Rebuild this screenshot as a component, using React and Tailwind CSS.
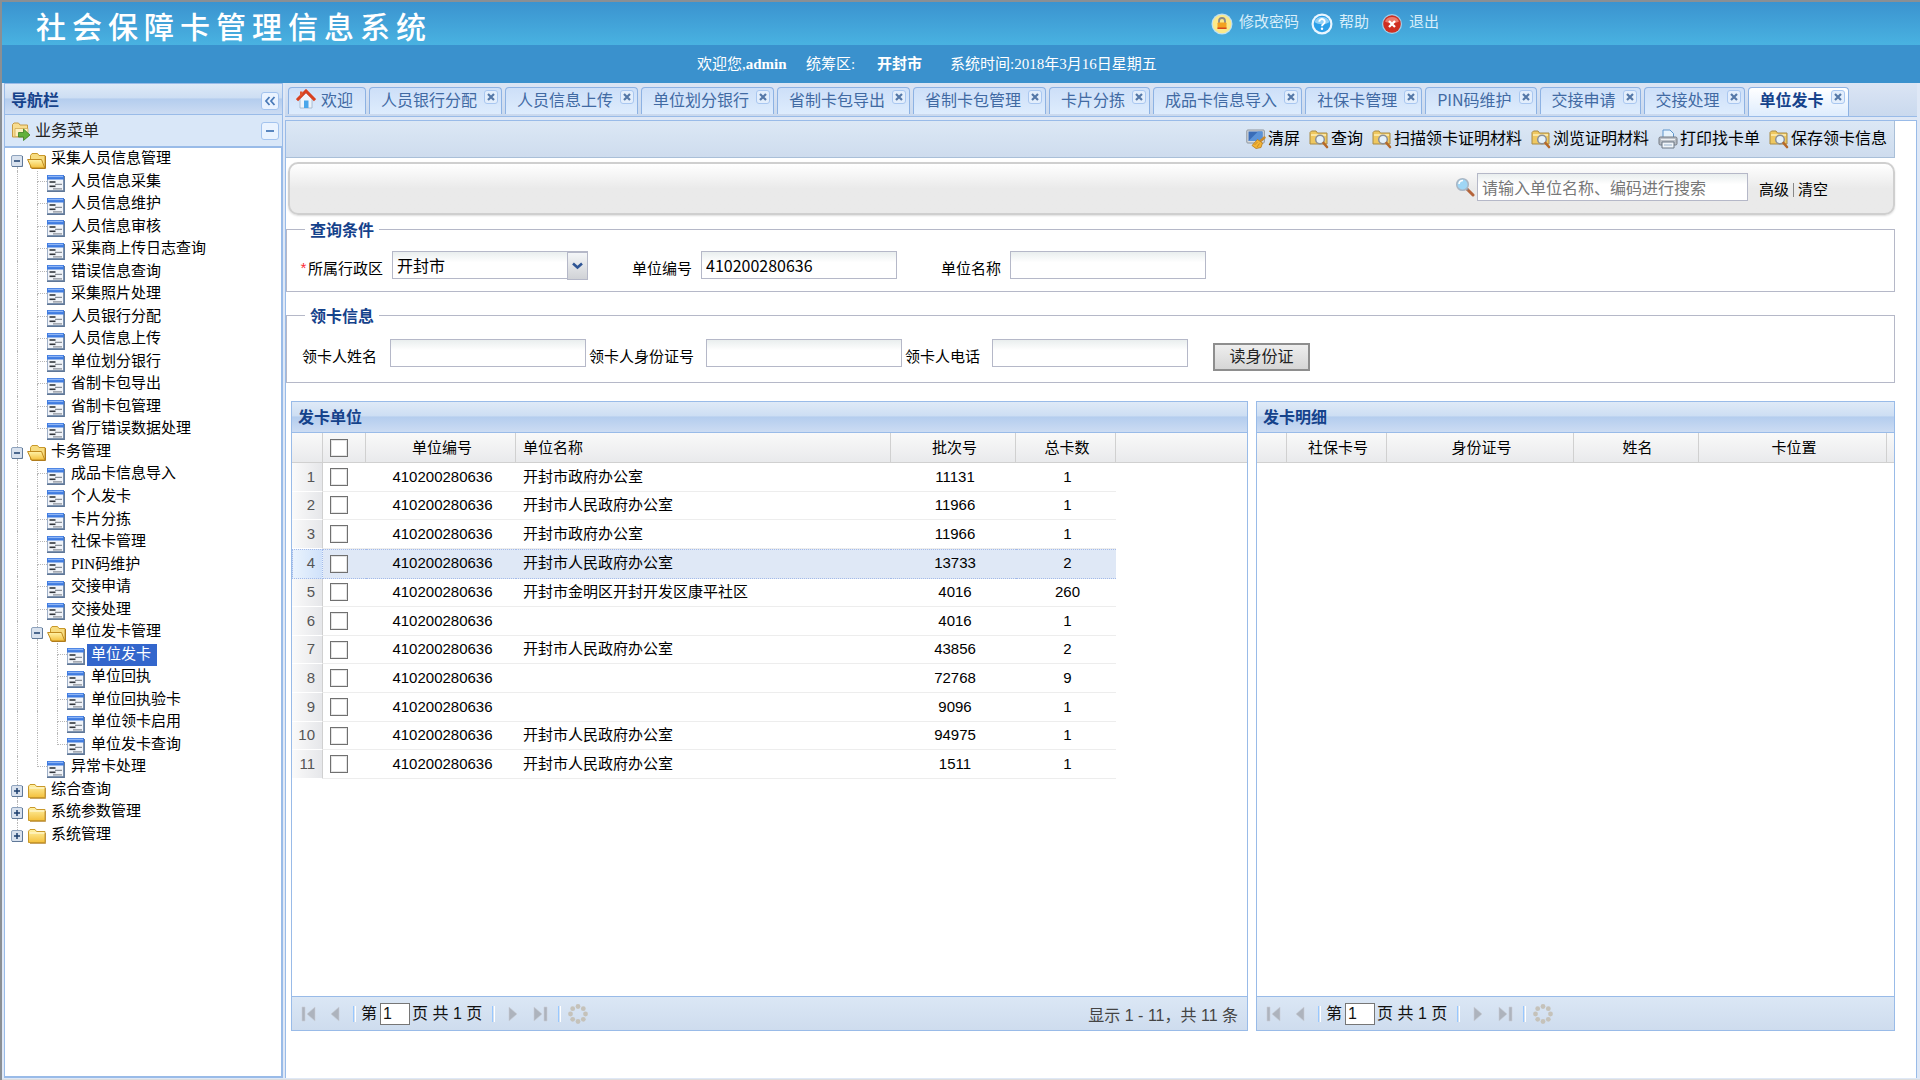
import React from 'react';

const TABS = [
  ['人员银行分配'], ['人员信息上传'], ['单位划分银行'], ['省制卡包导出'], ['省制卡包管理'], ['卡片分拣'],
  ['成品卡信息导入'], ['社保卡管理'], ['PIN码维护'], ['交接申请'], ['交接处理'], ['单位发卡', true],
];

const leaf = (label, selected) => ({ label, selected });
const TREE = [
  {
    label: '采集人员信息管理', open: true,
    children: ['人员信息采集', '人员信息维护', '人员信息审核', '采集商上传日志查询', '错误信息查询', '采集照片处理', '人员银行分配', '人员信息上传', '单位划分银行', '省制卡包导出', '省制卡包管理', '省厅错误数据处理'].map((t) => leaf(t)),
  },
  {
    label: '卡务管理', open: true,
    children: [
      ...['成品卡信息导入', '个人发卡', '卡片分拣', '社保卡管理', 'PIN码维护', '交接申请', '交接处理'].map((t) => leaf(t)),
      {
        label: '单位发卡管理', open: true,
        children: [leaf('单位发卡', true), leaf('单位回执'), leaf('单位回执验卡'), leaf('单位领卡启用'), leaf('单位发卡查询')],
      },
      leaf('异常卡处理'),
    ],
  },
  { label: '综合查询', children: [] },
  { label: '系统参数管理', children: [] },
  { label: '系统管理', children: [] },
];

function flatten(nodes, lines = []) {
  return nodes.flatMap((node, i) => {
    const last = i === nodes.length - 1;
    const row = { ...node, lines, last };
    return [row, ...(node.children && node.open ? flatten(node.children, [...lines, !last]) : [])];
  });
}
const ROWS = flatten(TREE);

const UNITS = [
  ['开封市政府办公室', '11131', '1'],
  ['开封市人民政府办公室', '11966', '1'],
  ['开封市政府办公室', '11966', '1'],
  ['开封市人民政府办公室', '13733', '2'],
  ['开封市金明区开封开发区康平社区', '4016', '260'],
  ['', '4016', '1'],
  ['开封市人民政府办公室', '43856', '2'],
  ['', '72768', '9'],
  ['', '9096', '1'],
  ['开封市人民政府办公室', '94975', '1'],
  ['开封市人民政府办公室', '1511', '1'],
];

/* ---------- icons ---------- */

function FolderIcon({ open }) {
  return (
    <svg width="20" height="18" viewBox="0 0 20 18" className="shrink-0" aria-hidden="true">
      <defs>
        <linearGradient id="fold" x1="0" y1="0" x2="0" y2="1">
          <stop offset="0" stopColor="#fff3a8" />
          <stop offset="1" stopColor="#f4c03c" />
        </linearGradient>
      </defs>
      {open ? (
        <>
          <path d="M3.500 15.500V3.500L5 1.500h5.500l1.500 2h6v11.500z" fill="#f7dc80" stroke="#c9992a" />
          <path d="M.6 7.500h13.900l3.300 8.500H4.500z" fill="url(#fold)" stroke="#c08a1e" />
          <path d="M18.500 4v12.500H4.500" fill="none" stroke="#b07c1c" />
        </>
      ) : (
        <>
          <path d="M1.500 15.500V4.200L3 2.500h5l1.500 2h8.500v11z" fill="url(#fold)" stroke="#c9992a" />
          <path d="M2.500 6h15" stroke="#fffbe0" />
          <path d="M18.500 6v10.500H3" fill="none" stroke="#b07c1c" opacity=".7" />
        </>
      )}
    </svg>
  );
}

function PageIcon() {
  return (
    <svg width="18" height="18" viewBox="0 0 18 18" className="shrink-0" aria-hidden="true">
      <rect x=".5" y="1.500" width="16" height="15" fill="#f1f4f9" stroke="#9fb0c8" />
      <path d="M0 17.200h17.200V2" fill="none" stroke="#5e7696" strokeWidth="1.500" />
      <rect x="0" y="1" width="17" height="4.500" fill="#3f7be0" />
      <rect x="1" y="1.800" width="15" height="1.300" fill="#8fb6f6" />
      <path d="M2.500 8h6" stroke="#33373d" strokeWidth="1.600" />
      <path d="M8 10.300h7M6 14.800h9" stroke="#8a9099" strokeWidth="1.300" />
      <path d="M2.500 12.300h6" stroke="#33373d" strokeWidth="1.600" />
    </svg>
  );
}

function Toggle({ open }) {
  return (
    <svg width="12" height="12" viewBox="0 0 12 12" aria-hidden="true">
      <rect x=".5" y=".5" width="11" height="11" rx="1.500" fill="#d9e2ee" stroke="#8fa3bd" />
      <path d="M1 11.500h10.500V1" fill="none" stroke="#5f7898" />
      <path d={open ? 'M3 6h6' : 'M3 6h6M6 3v6'} stroke="#1d3f6e" strokeWidth="1.500" />
    </svg>
  );
}

function FolderSearchIcon() {
  return (
    <svg width="20" height="20" viewBox="0 0 20 20" className="shrink-0" aria-hidden="true">
      <path d="M1 15V3.500L2.500 2H7l1.500 2H18v11z" fill="#efc860" stroke="#a98a44" />
      <path d="M2 6h15" stroke="#fff0b8" strokeWidth="1.500" />
      <circle cx="11" cy="10.500" r="4.300" fill="#e4f1fb" stroke="#8b8f96" strokeWidth="1.500" />
      <path d="M14.500 14l3.500 4" stroke="#b5692b" strokeWidth="2.600" strokeLinecap="round" />
    </svg>
  );
}

function ClearIcon() {
  return (
    <svg width="20" height="20" viewBox="0 0 20 20" className="shrink-0" aria-hidden="true">
      <rect x=".8" y="1" width="17.500" height="13" rx="1" fill="#d6dade" stroke="#8d949c" />
      <rect x="2.500" y="2.500" width="14" height="9.500" fill="#3a6db8" />
      <path d="M2.500 12L12 2.500h4.500V12z" fill="#5b93d8" />
      <path d="M18.500 8.500l-4 3.500" stroke="#c98a2c" strokeWidth="2.400" strokeLinecap="round" />
      <path d="M11.500 10.500l5 3.500-1.500 4.500-5 1-4-3z" fill="#f2b436" stroke="#b97a1b" strokeWidth=".8" />
      <path d="M8.500 16l3-3M11 18l2.500-3.500" stroke="#c4821d" strokeWidth=".8" />
    </svg>
  );
}

function PrintIcon() {
  return (
    <svg width="20" height="20" viewBox="0 0 20 20" className="shrink-0" aria-hidden="true">
      <path d="M5 9V1h7l3.500 3.500V9z" fill="#e6f3fd" stroke="#5d94cb" />
      <rect x="1" y="8" width="18" height="8" rx="1.500" fill="#b4bac2" stroke="#747a83" />
      <path d="M3 10.500h14" stroke="#eef0f2" strokeWidth="1.300" />
      <path d="M4 13h12v6H4z" fill="#f0f5fa" stroke="#6d7986" />
      <path d="M6 16h8" stroke="#9ab4cf" />
    </svg>
  );
}

function MagnifierIcon() {
  return (
    <svg width="20" height="20" viewBox="0 0 20 20" className="shrink-0" aria-hidden="true">
      <path d="M12 12l6 6" stroke="#b5643a" strokeWidth="3" strokeLinecap="round" />
      <path d="M11 11l2 2" stroke="#8a8f98" strokeWidth="2" />
      <circle cx="7.500" cy="7.500" r="5.800" fill="#9fd6f5" stroke="#a9b6c4" strokeWidth="1.500" />
      <path d="M4 7a4 4 0 0 1 4-3.500" fill="none" stroke="#fff" strokeWidth="1.600" />
    </svg>
  );
}

function LockIcon() {
  return (
    <svg width="22" height="22" viewBox="0 0 22 22" aria-hidden="true">
      <circle cx="11" cy="11" r="10.500" fill="#fff" opacity=".65" />
      <circle cx="11" cy="11" r="9.300" fill="#fbe98a" />
      <path d="M8 10V8a3 3 0 0 1 6 0v2" fill="none" stroke="#8a8a8a" strokeWidth="1.800" />
      <rect x="6.500" y="9.500" width="9" height="6.500" rx=".8" fill="#f3a21f" />
      <path d="M6.500 14.500h9V16h-9z" fill="#d8471c" />
    </svg>
  );
}

function HelpIcon() {
  return (
    <svg width="22" height="22" viewBox="0 0 22 22" aria-hidden="true">
      <circle cx="11" cy="11" r="10.500" fill="#eaf6ff" />
      <circle cx="11" cy="11" r="8.300" fill="#2b9fe8" />
      <path d="M3.500 9a8 7.500 0 0 1 15 0c-4 3-11 3-15 0z" fill="#8fd0f7" />
      <path d="M8.300 8.800a2.700 2.700 0 1 1 4.200 2.200c-1.100.7-1.500 1.100-1.500 2.200" fill="none" stroke="#fff" strokeWidth="1.900" />
      <circle cx="11" cy="15.800" r="1.200" fill="#fff" />
    </svg>
  );
}

function ExitIcon() {
  return (
    <svg width="22" height="22" viewBox="0 0 22 22" aria-hidden="true">
      <circle cx="11" cy="11" r="10" fill="#fff" opacity=".5" />
      <circle cx="11" cy="11" r="8.800" fill="#cf2f22" />
      <path d="M4 8.500a7.500 7 0 0 1 14 0c-4 2-10 2-14 0z" fill="#ec7a6c" />
      <path d="M8 8l6 6M14 8l-6 6" stroke="#fff" strokeWidth="2.300" />
    </svg>
  );
}

function HomeIcon() {
  return (
    <svg width="20" height="20" viewBox="0 0 20 20" className="shrink-0" aria-hidden="true">
      <path d="M4 9.500L10 4l6 5.500V19H4z" fill="#eef4fb" stroke="#9fb2c9" strokeWidth=".8" />
      <rect x="8" y="11.500" width="4.500" height="7.500" fill="#4aa6ea" />
      <path d="M1 11.200L10 2l9 9.200" fill="none" stroke="#d9401f" strokeWidth="3" />
      <path d="M4 2.500h2.500V6L4 8z" fill="#e0562e" />
    </svg>
  );
}

function MenuFolderIcon() {
  return (
    <svg width="20" height="20" viewBox="0 0 20 20" className="shrink-0" aria-hidden="true">
      <path d="M1.500 16V3.500L3 2h4.500L9 4h7.500v12z" fill="#f8dd90" stroke="#c59a45" />
      <path d="M4 7.500h13v8H4z" fill="#fdf0c0" stroke="#d2ab55" strokeWidth=".8" />
      <path d="M7.500 11.500h5V8l6.500 6-6.500 5.500v-3.500h-5z" fill="#63b13c" stroke="#3b7e22" strokeWidth=".8" />
    </svg>
  );
}

const PAGE_ICONS = {
  first: 'M1 1h3v14H1zM14 1v14L6 8z',
  prev: 'M9 1v14L1 8z',
  next: 'M1 1v14l8-7z',
  last: 'M1 1v14l8-7zM11 1h3v14h-3z',
};

function PagerButton({ kind, label, className }) {
  const wide = kind === 'first' || kind === 'last';
  return (
    <button type="button" aria-label={label} className={className}>
      <svg width={wide ? 15 : 10} height="16" viewBox={wide ? '0 0 15 16' : '0 0 10 16'}>
        <path d={PAGE_ICONS[kind]} fill="#adb3bd" stroke="#c9ced6" strokeWidth=".6" />
      </svg>
    </button>
  );
}

function SpinnerIcon() {
  return (
    <svg width="20" height="20" viewBox="0 0 20 20">
      {[[10, 2.500], [15.300, 4.700], [17.500, 10], [15.300, 15.300], [10, 17.500], [4.700, 15.300], [2.500, 10], [4.700, 4.700]].map(([x, y]) => (
        <circle key={`${x}-${y}`} cx={x} cy={y} r="2.400" fill="#c5c2ba" />
      ))}
    </svg>
  );
}

/* ---------- pieces ---------- */

function TopLink({ icon, children }) {
  return (
    <a href="#" className="flex items-center gap-[6px] text-[15px] text-[#d9effa]">
      {icon}
      <span className="pb-[2px]">{children}</span>
    </a>
  );
}

function TreeLine({ visible }) {
  return <span className="w-5 self-stretch pl-[10px]"><span className={visible ? 'block h-full border-l border-dotted border-[#b8b8b8]' : 'hidden'} /></span>;
}

function TreeRow({ row }) {
  const folder = !!row.children;
  const depth = row.lines.length;
  return (
    <li className="flex min-h-0 items-center pl-[2px]">
      {row.lines.map((on, i) => <TreeLine key={i} visible={on} />)}
      {folder ? (
        <button type="button" aria-label={row.label} className="flex w-5 flex-col items-center self-stretch">
          <span className={depth === 0 && row.label === TREE[0].label ? 'flex-1' : 'flex-1 border-l border-dotted border-[#b8b8b8]'} />
          <Toggle open={row.open} />
          <span className={row.last ? 'h-1' : 'h-1 border-l border-dotted border-[#b8b8b8]'} />
        </button>
      ) : (
        <span className="flex w-5 flex-col self-stretch pl-[10px]">
          <span className="h-1/2 border-b border-l border-dotted border-[#b8b8b8]" />
          <span className={row.last ? 'h-1/2' : 'h-1/2 border-l border-dotted border-[#b8b8b8]'} />
        </span>
      )}
      <span className="w-5 pt-[3px]">{folder ? <FolderIcon open={row.open} /> : <PageIcon />}</span>
      <a href="#" className={row.selected ? 'bg-[#3366cc] pr-[6px] pb-[2px] pl-1 leading-5 text-white' : 'pb-[2px] pl-1 leading-5'}>{row.label}</a>
    </li>
  );
}

function Tab({ label, active }) {
  return (
    <div
      className={
        active
          ? 'flex h-[29px] rounded-t border border-b-0 border-[#8db2e3] bg-gradient-to-b from-white to-[#deecfd] pr-[3px] pl-[11px] font-bold text-[#15428b]'
          : 'flex h-[27px] rounded-t border border-b-0 border-[#8db2e3] bg-gradient-to-b from-[#cddff8] to-[#deecfd] pr-[3px] pl-[11px] text-[#416aa3]'
      }
    >
      <button type="button" className="h-[26px] pb-1 leading-[22px]">{label}</button>
      <button type="button" aria-label={`关闭${label}`} className="mt-[2px] ml-[7px] flex size-[14px] items-center justify-center rounded-[3px] border border-[#a9c7f0] bg-[#e3eefc]">
        <svg width="8" height="8" viewBox="0 0 8 8"><path d="M1 1l6 6M7 1L1 7" stroke="#5578a8" strokeWidth="2.200" /></svg>
      </button>
    </div>
  );
}

const FIELD = 'h-7 w-[196px] border border-[#b5b8c8] bg-gradient-to-b from-[#e9eeee] via-white via-40% to-white px-1 text-base text-black outline-none';

function Field({ id, label, labelClass, value }) {
  return (
    <div className="flex items-start">
      <label htmlFor={id} className={labelClass}>{label}</label>
      <input id={id} defaultValue={value} className={FIELD} />
    </div>
  );
}

function ToolButton({ icon, children }) {
  return <button type="button" className="flex items-center gap-[2px] text-base text-black">{icon}{children}</button>;
}

function Separator() {
  return <span className="h-4 w-[3px] border-r border-l border-r-white border-l-[#98c8ff]" />;
}

function Pager({ id, info }) {
  return (
    <div className="flex h-[34px] items-center border-t border-[#99bbe8] bg-gradient-to-b from-[#dbe7f5] to-[#cedcee] pl-[9px] text-base whitespace-nowrap text-[#111]">
      <PagerButton kind="first" label="首页" className="w-[29px]" />
      <PagerButton kind="prev" label="上一页" className="w-[23px]" />
      <Separator />
      <label htmlFor={id} className="ml-[5px]">第</label>
      <input id={id} defaultValue="1" className="ml-[3px] h-[22px] w-[30px] border border-[#767676] bg-white px-[2px]" />
      <span className="ml-[2px] w-[80px]">页 共 1 页</span>
      <Separator />
      <PagerButton kind="next" label="下一页" className="ml-[13px] w-[25px]" />
      <PagerButton kind="last" label="末页" className="w-[25px]" />
      <Separator />
      <button type="button" aria-label="刷新" className="ml-[7px]"><SpinnerIcon /></button>
      {info && <span className="ml-auto pt-1 pr-[9px] text-[#444]">{info}</span>}
    </div>
  );
}

function PanelTitle({ children }) {
  return (
    <h2 className="h-[31px] border-b border-[#99bbe8] bg-[linear-gradient(to_bottom,#dfeaf7_0%,#cddef3_46%,#b4cdee_50%,#ccdcf3_100%)] pl-[6px] text-base leading-[32px] font-bold text-[#15428b]">{children}</h2>
  );
}

const TH = 'h-[30px] border-r border-b border-[#d0d0d0] bg-gradient-to-b from-[#f9f9f9] to-[#e9eaec] p-0 pt-px font-normal';
const CHECK = 'block size-[18px] appearance-none border border-[#707070] bg-white shadow-[inset_0_0_0_1px_#e4e4e4]';

function UnitTable() {
  return (
    <table className="h-[346px] w-full table-fixed border-separate border-spacing-0 text-[15px] text-black">
      <colgroup>
        <col className="w-[31px]" />
        <col className="w-[43px]" />
        <col className="w-[150px]" />
        <col className="w-[375px]" />
        <col className="w-[125px]" />
        <col className="w-[100px]" />
        <col />
      </colgroup>
      <thead>
        <tr>
          <th className={TH} />
          <th className={TH}><input type="checkbox" aria-label="全选" className={`${CHECK} ml-[7px]`} /></th>
          <th className={`${TH} pl-[3px]`}>单位编号</th>
          <th className={`${TH} pl-[7px] text-left`}>单位名称</th>
          <th className={`${TH} pl-[3px]`}>批次号</th>
          <th className={`${TH} pl-[3px]`}>总卡数</th>
          <th className="border-b border-[#d0d0d0] bg-gradient-to-b from-[#f9f9f9] to-[#e9eaec]" />
        </tr>
      </thead>
      <tbody>
        {UNITS.map(([name, batch, total], i) => {
          const on = i === 3;
          const cell = on ? 'border-y border-dotted border-[#a3bae9] bg-[#dfe8f6] p-0' : 'border-b border-[#ededed] p-0';
          return (
            <tr key={i}>
              <td className={on ? 'border border-dotted border-[#a3bae9] bg-gradient-to-r from-[#eaf3fd] to-[#cfe1fa] p-0' : 'border-r border-b border-r-[#d0d0d0] border-b-white bg-gradient-to-r from-[#fafafa] to-[#e6e7ea] p-0'}>
                <div className="pr-[7px] text-right text-[#555]">{i + 1}</div>
              </td>
              <td className={cell}><input type="checkbox" aria-label={`选择第${i + 1}行`} className={`${CHECK} ml-[7px]`} /></td>
              <td className={`${cell} text-center`}><div className="pl-[3px]">410200280636</div></td>
              <td className={cell}><div className="pl-[7px]">{name}</div></td>
              <td className={`${cell} text-center`}><div className="pl-[3px]">{batch}</div></td>
              <td className={`${cell} text-center`}><div className="pl-[3px]">{total}</div></td>
              <td />
            </tr>
          );
        })}
      </tbody>
    </table>
  );
}

function DetailTable() {
  return (
    <table className="w-full table-fixed border-separate border-spacing-0 text-[15px] text-black">
      <colgroup>
        <col className="w-[30px]" />
        <col className="w-[100px]" />
        <col className="w-[187px]" />
        <col className="w-[125px]" />
        <col className="w-[188px]" />
        <col />
      </colgroup>
      <thead>
        <tr>
          <th className={TH} />
          <th className={`${TH} pl-[3px]`}>社保卡号</th>
          <th className={`${TH} pl-[3px]`}>身份证号</th>
          <th className={`${TH} pl-[3px]`}>姓名</th>
          <th className={`${TH} pl-[3px]`}>卡位置</th>
          <th className="border-b border-[#d0d0d0] bg-gradient-to-b from-[#f9f9f9] to-[#e9eaec]" />
        </tr>
      </thead>
    </table>
  );
}

const LEGEND = 'ml-[18px] px-[5px] text-base leading-6 font-bold text-[#15428b]';

export default function App() {
  return (
    <div className="flex min-h-screen flex-col border-t-2 border-l-2 border-[#8a8f94] bg-white font-['Liberation_Sans','Noto_Sans_CJK_SC',sans-serif] text-black">
      <header className="font-['Liberation_Serif','Noto_Sans_CJK_SC',serif]">
        <div className="flex h-[43px] items-center bg-gradient-to-b from-[#3b93cf] to-[#49b2e1]">
          <h1 className="w-[1209px] pt-2 pl-[34px] text-[30px] leading-[35px] font-medium text-white">
            {[...'社会保障卡管理信息系统'].map((ch, i) => <span key={i} className="mr-[6px]">{ch}</span>)}
          </h1>
          <nav className="flex gap-3">
            <TopLink icon={<LockIcon />}>修改密码</TopLink>
            <TopLink icon={<HelpIcon />}>帮助</TopLink>
            <TopLink icon={<ExitIcon />}>退出</TopLink>
          </nav>
        </div>
        <div className="flex h-[38px] items-center bg-[#3a91cd] pl-[695px] text-[15px] whitespace-nowrap text-white">
          <span className="w-[109px]">欢迎您,<b>admin</b></span>
          <span className="w-[71px]">统筹区:</span>
          <b className="w-[73px]">开封市</b>
          <span>系统时间:2018年3月16日星期五</span>
        </div>
      </header>

      <div className="flex flex-1 border-b border-[#ddd] bg-[#dfe8f6] pb-px">
        <aside className="flex w-[281px] shrink-0 flex-col pl-[2px]">
          <div className="flex h-8 items-center justify-between border border-[#99bbe8] bg-[linear-gradient(to_bottom,#dfeaf7_0%,#cddef3_46%,#b4cdee_50%,#ccdcf3_100%)] pt-[3px] pr-[3px] pl-[6px]">
            <h2 className="text-base font-bold text-[#15428b]">导航栏</h2>
            <button type="button" aria-label="收起" className="flex size-[18px] items-center justify-center rounded-[3px] border border-[#a3c3ee] bg-[#eaf3ff]">
              <svg width="12" height="12" viewBox="0 0 12 12"><path d="M5.500 2L2 6l3.500 4M10.500 2L7 6l3.500 4" fill="none" stroke="#4a7ab8" strokeWidth="1.800" /></svg>
            </button>
          </div>
          <div className="flex h-[31px] items-center gap-1 border-x border-[#99bbe8] bg-[#d9e7f8] pt-px pr-[3px] pl-[6px]">
            <MenuFolderIcon />
            <h3 className="text-base text-[#222]">业务菜单</h3>
            <button type="button" aria-label="折叠" className="ml-auto flex size-[18px] items-center justify-center rounded-[3px] border border-[#a3c3ee] bg-[#eaf3ff]">
              <svg width="10" height="10" viewBox="0 0 10 10"><path d="M1 5h8" stroke="#4a7ab8" strokeWidth="1.800" /></svg>
            </button>
          </div>
          <nav className="flex-1 border-2 border-l border-[#99bbe8] bg-white">
            <ul className="grid h-[698px] auto-rows-fr font-['Liberation_Serif','Noto_Sans_CJK_SC',serif] text-[15px] whitespace-nowrap">
              {ROWS.map((row, i) => <TreeRow key={i} row={row} />)}
            </ul>
          </nav>
        </aside>

        <div className="mr-[3px] ml-[2px] flex min-w-0 flex-1 flex-col">
          <div className="flex h-[34px] items-start gap-[3px] border-b border-[#99bbe8] bg-gradient-to-b from-[#dbe5f4] to-[#cad9ee] pt-1 pl-[3px] font-['Noto_Sans_CJK_SC',sans-serif] text-base whitespace-nowrap">
            <div className="flex h-[27px] rounded-t border border-b-0 border-[#8db2e3] bg-gradient-to-b from-[#cddff8] to-[#deecfd] pr-3 pl-[7px] text-[#416aa3]">
              <button type="button" className="flex h-[26px] items-center gap-[5px] pb-1 leading-[22px]"><HomeIcon />欢迎</button>
            </div>
            {TABS.map(([label, active]) => <Tab key={label} label={label} active={active} />)}
          </div>

          <main className="mt-[3px] flex flex-1 flex-col border-t border-r border-l border-[#99bbe8] bg-white pr-[21px] pb-[47px]">
            <div className="flex h-[37px] items-center justify-end gap-[9px] border-r border-b border-[#a9bfd8] bg-gradient-to-b from-[#dce8f5] to-[#cedcee] pr-[7px] whitespace-nowrap">
              <ToolButton icon={<ClearIcon />}>清屏</ToolButton>
              <ToolButton icon={<FolderSearchIcon />}>查询</ToolButton>
              <ToolButton icon={<FolderSearchIcon />}>扫描领卡证明材料</ToolButton>
              <ToolButton icon={<FolderSearchIcon />}>浏览证明材料</ToolButton>
              <ToolButton icon={<PrintIcon />}>打印找卡单</ToolButton>
              <ToolButton icon={<FolderSearchIcon />}>保存领卡信息</ToolButton>
            </div>

            <form className="mt-1 ml-[2px] flex h-[53px] items-center justify-end rounded-[10px] border-2 border-[#cfcfcf] bg-gradient-to-b from-white to-[#eaeaea] to-50% pr-[65px] pb-[3px] shadow-[0_1px_2px_#ddd]">
              <label htmlFor="unit-search" aria-label="搜索" className="mr-[2px]"><MagnifierIcon /></label>
              <input id="unit-search" placeholder="请输入单位名称、编码进行搜索" className="h-7 w-[271px] border border-[#b5b8c8] bg-gradient-to-b from-[#e9eeee] via-white via-40% to-white px-1 font-['Noto_Sans_CJK_SC',sans-serif] text-base placeholder:text-[#777]" />
              <div className="ml-[11px] flex items-center gap-1 pt-[6px] text-[15px]">
                <a href="#">高级</a>
                <span className="h-[14px] w-px bg-[#888]" />
                <a href="#">清空</a>
              </div>
            </form>

            <fieldset className="mt-[2px] h-[75px] border border-[#b5b8c8] font-['Noto_Sans_CJK_SC',sans-serif] text-[15px]">
              <legend className={LEGEND}>查询条件</legend>
              <div className="flex gap-11 pt-[10px] pl-3">
                <div className="flex items-start">
                  <label htmlFor="region" className="w-[93px] pt-[6px] leading-[22px]"><span className="font-['Liberation_Mono',monospace] text-red-500">*</span>所属行政区</label>
                  <div className="relative">
                    <select id="region" defaultValue="开封市" className={`${FIELD} appearance-none`}>
                      <option>开封市</option>
                    </select>
                    <span className="pointer-events-none absolute top-px right-0 flex h-7 w-[21px] items-center justify-center border border-[#b5b8c8] bg-gradient-to-b from-[#f4f6f8] to-[#d0d2d6]">
                      <svg width="11" height="8" viewBox="0 0 11 8"><path d="M1 1.500l4.500 4 4.500-4" fill="none" stroke="#2f5595" strokeWidth="2.600" /></svg>
                    </span>
                  </div>
                </div>
                <Field id="unit-no" label="单位编号" labelClass="w-[69px] pt-[6px] leading-[22px]" value="410200280636" />
                <Field id="unit-name" label="单位名称" labelClass="w-[69px] pt-[6px] leading-[22px]" />
              </div>
            </fieldset>

            <fieldset className="mt-[11px] h-[80px] border border-[#b5b8c8] font-['Noto_Sans_CJK_SC',sans-serif] text-[15px]">
              <legend className={LEGEND}>领卡信息</legend>
              <div className="flex items-start gap-[3px] pt-3 pl-[15px]">
                <Field id="taker-name" label="领卡人姓名" labelClass="w-[88px] pt-[6px] leading-[22px]" />
                <Field id="taker-id" label="领卡人身份证号" labelClass="w-[117px] pt-[6px] leading-[22px]" />
                <Field id="taker-phone" label="领卡人电话" labelClass="w-[87px] pt-[6px] leading-[22px]" />
                <button type="button" className="mt-1 ml-[22px] h-7 w-[97px] border-2 border-[#8e8e8e] bg-gradient-to-b from-[#eeeeee] to-[#d6d6d6] pb-1 text-base leading-5 text-[#222]">读身份证</button>
              </div>
            </fieldset>

            <div className="mt-[18px] ml-[5px] flex flex-1 gap-2">
              <section className="flex min-w-0 flex-[958] flex-col border border-[#99bbe8]">
                <PanelTitle>发卡单位</PanelTitle>
                <div className="flex-1"><UnitTable /></div>
                <Pager id="unit-page" info="显示 1 - 11，共 11 条" />
              </section>
              <section className="flex min-w-0 flex-[639] flex-col border border-[#99bbe8]">
                <PanelTitle>发卡明细</PanelTitle>
                <div className="flex-1"><DetailTable /></div>
                <Pager id="detail-page" />
              </section>
            </div>
          </main>
        </div>
      </div>
    </div>
  );
}
